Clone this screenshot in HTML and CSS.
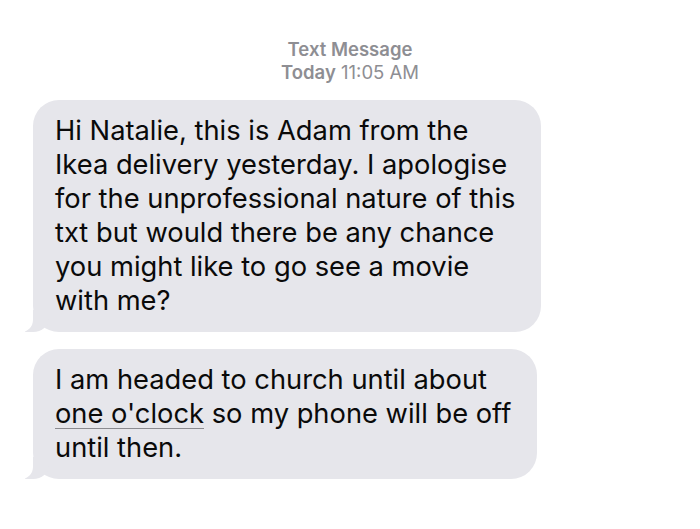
FILE: index.html
```html
<!DOCTYPE html>
<html>
<head>
<meta charset="utf-8">
<link rel="stylesheet" href="styles.css">
</head>
<body>
<div class="thread">
  <div class="stamp">
    <div class="stamp-title">Text Message</div>
    <div class="stamp-time"><b>Today</b> 11:05 AM</div>
  </div>
  <div class="bubble">Hi Natalie, this is Adam from the<br>Ikea delivery yesterday. I apologise<br>for the unprofessional nature of this<br>txt but would there be any chance<br>you might like to go see a movie<br>with me?</div>
  <div class="bubble">I am headed to church until about<br><span class="link">one o'clock</span> so my phone will be off<br>until then.</div>
</div>
</body>
</html>
```

FILE: styles.css
```css
html, body {
  margin: 0;
  background: #ffffff;
}

.thread {
  width: 700px;
  height: 529px;
  overflow: hidden;
  display: flex;
  flex-direction: column;
  align-items: flex-start;
  font-family: Inter, "Liberation Sans", sans-serif;
}

.stamp {
  align-self: stretch;
  text-align: center;
  color: #8e8e93;
  font-size: 18.5px;
  line-height: 23px;
  padding: 38px 0 0 0;
  margin-bottom: 16px;
}

.stamp-title {
  font-weight: 600;
}

.stamp-time b {
  font-weight: 600;
}

.bubble {
  position: relative;
  box-sizing: border-box;
  margin-left: 33px;
  margin-bottom: 17px;
  padding: 14px 26px 14px 22px;
  background: #e6e6eb;
  border-radius: 26px;
  color: #0a0a0a;
  font-size: 27.3px;
  line-height: 34px;
  white-space: nowrap;
}

/* tail at the lower-left corner */
.bubble::before {
  content: "";
  position: absolute;
  left: -8px;
  bottom: 0;
  width: 24px;
  height: 22px;
  background: #e6e6eb;
  border-bottom-right-radius: 16px 14px;
}

.bubble::after {
  content: "";
  position: absolute;
  left: -18px;
  bottom: 0;
  width: 18px;
  height: 22px;
  background: #ffffff;
  border-bottom-right-radius: 12px;
}

.link {
  text-decoration: underline;
  text-decoration-color: #8a8a8f;
  text-decoration-thickness: 1px;
  text-underline-offset: 5px;
}
```
